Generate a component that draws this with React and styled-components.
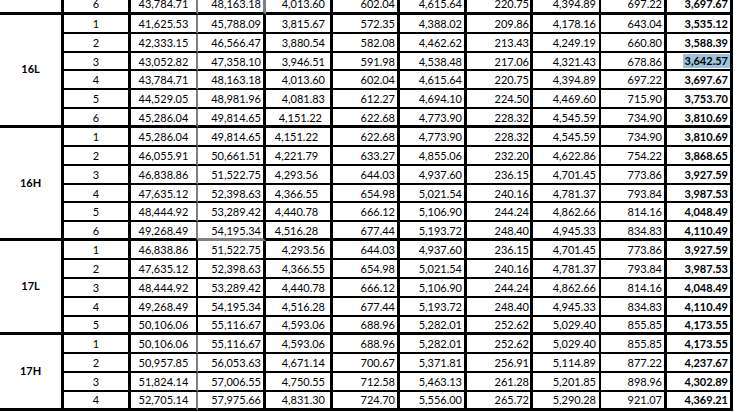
import React from 'react'
import styled, { createGlobalStyle } from 'styled-components'

const GlobalStyle = createGlobalStyle`
  html, body {
    margin: 0;
    padding: 0;
    background: #ffffff;
  }
  body {
    font-family: Lato, "Open Sans", sans-serif;
  }
`

const GRID = '#7f7f7f'

// width, right border, alignment and right padding of every column
const columns = [
  { width: 64, edge: 3 },
  { width: 67, edge: 3, align: 'center', pad: 0 },
  { width: 67, edge: 2, align: 'center', pad: 0 },
  { width: 68, edge: 3, align: 'flex-end', pad: 2 },
  { width: 67, edge: 3, align: 'flex-end', pad: 5 },
  { width: 67, edge: 3, align: 'flex-end', pad: 2 },
  { width: 67, edge: 3, align: 'flex-end', pad: 2 },
  { width: 66, edge: 3, align: 'flex-end', pad: 1 },
  { width: 68, edge: 2, align: 'flex-end', pad: 3 },
  { width: 66, edge: 3, align: 'flex-end', pad: 2 },
  { width: 66, edge: 3, align: 'flex-end', pad: 2 },
]

const topRow = ['6', '43,784.71', '48,163.18', '4,013.60', '602.04', '4,615.64', '220.75', '4,394.89', '697.22', '3,697.67']

const groups = [
  {
    label: '16L',
    greyRule: true,
    rows: [
      ['1', '41,625.53', '45,788.09', '3,815.67', '572.35', '4,388.02', '209.86', '4,178.16', '643.04', '3,535.12'],
      ['2', '42,333.15', '46,566.47', '3,880.54', '582.08', '4,462.62', '213.43', '4,249.19', '660.80', '3,588.39'],
      ['3', '43,052.82', '47,358.10', '3,946.51', '591.98', '4,538.48', '217.06', '4,321.43', '678.86', '3,642.57'],
      ['4', '43,784.71', '48,163.18', '4,013.60', '602.04', '4,615.64', '220.75', '4,394.89', '697.22', '3,697.67'],
      ['5', '44,529.05', '48,981.96', '4,081.83', '612.27', '4,694.10', '224.50', '4,469.60', '715.90', '3,753.70'],
      ['6', '45,286.04', '49,814.65', '4,151.22', '622.68', '4,773.90', '228.32', '4,545.59', '734.90', '3,810.69'],
    ],
  },
  {
    label: '16H',
    greyRule: true,
    centerTax: true,
    rows: [
      ['1', '45,286.04', '49,814.65', '4,151.22', '622.68', '4,773.90', '228.32', '4,545.59', '734.90', '3,810.69'],
      ['2', '46,055.91', '50,661.51', '4,221.79', '633.27', '4,855.06', '232.20', '4,622.86', '754.22', '3,868.65'],
      ['3', '46,838.86', '51,522.75', '4,293.56', '644.03', '4,937.60', '236.15', '4,701.45', '773.86', '3,927.59'],
      ['4', '47,635.12', '52,398.63', '4,366.55', '654.98', '5,021.54', '240.16', '4,781.37', '793.84', '3,987.53'],
      ['5', '48,444.92', '53,289.42', '4,440.78', '666.12', '5,106.90', '244.24', '4,862.66', '814.16', '4,048.49'],
      ['6', '49,268.49', '54,195.34', '4,516.28', '677.44', '5,193.72', '248.40', '4,945.33', '834.83', '4,110.49'],
    ],
  },
  {
    label: '17L',
    greyRule: false,
    rows: [
      ['1', '46,838.86', '51,522.75', '4,293.56', '644.03', '4,937.60', '236.15', '4,701.45', '773.86', '3,927.59'],
      ['2', '47,635.12', '52,398.63', '4,366.55', '654.98', '5,021.54', '240.16', '4,781.37', '793.84', '3,987.53'],
      ['3', '48,444.92', '53,289.42', '4,440.78', '666.12', '5,106.90', '244.24', '4,862.66', '814.16', '4,048.49'],
      ['4', '49,268.49', '54,195.34', '4,516.28', '677.44', '5,193.72', '248.40', '4,945.33', '834.83', '4,110.49'],
      ['5', '50,106.06', '55,116.67', '4,593.06', '688.96', '5,282.01', '252.62', '5,029.40', '855.85', '4,173.55'],
    ],
  },
  {
    label: '17H',
    greyRule: true,
    rows: [
      ['1', '50,106.06', '55,116.67', '4,593.06', '688.96', '5,282.01', '252.62', '5,029.40', '855.85', '4,173.55'],
      ['2', '50,957.85', '56,053.63', '4,671.14', '700.67', '5,371.81', '256.91', '5,114.89', '877.22', '4,237.67'],
      ['3', '51,824.14', '57,006.55', '4,750.55', '712.58', '5,463.13', '261.28', '5,201.85', '898.96', '4,302.89'],
      ['4', '52,705.14', '57,975.66', '4,831.30', '724.70', '5,556.00', '265.72', '5,290.28', '921.07', '4,369.21'],
    ],
  },
]

const Viewport = styled.div`
  width: 751px;
  height: 412px;
  overflow: hidden;
  background: #ffffff;
`

const Sheet = styled.div`
  display: grid;
  grid-template-columns: ${columns.map(c => c.width + 'px').join(' ')};
  grid-auto-rows: 18.86px;
  margin-top: -4px;
  width: max-content;
  font-size: 11px;
  color: #000000;
`

const GroupLabel = styled.div`
  grid-row: span ${p => p.$span};
  display: flex;
  align-items: center;
  justify-content: center;
  border-right: 3px solid #000000;
  border-bottom: 3px solid #000000;
  font-weight: 700;
  padding-bottom: 2px;
`

const Cell = styled.div`
  display: flex;
  align-items: center;
  justify-content: ${p => p.$align};
  padding: 0 ${p => p.$pad}px 0 0;
  border-right: ${p => p.$edge}px solid ${p => p.$edgeColor};
  border-bottom: ${p => (p.$end ? 3 : 2)}px solid ${p => p.$bottomColor};
  font-weight: ${p => (p.$bold ? 700 : 400)};
  white-space: nowrap;
  overflow: hidden;
`

const Selected = styled.span`
  background: #9cc3dc;
  padding: 0 2px;
  line-height: 14px;
  margin-right: -2px;
`

const Row = ({ values, end, greyRule, greyRight, centerTax, taxPad, greyBottom, highlight }) => (
  <>
    {values.map((value, i) => {
      const col = columns[i + 1]
      let edgeColor = '#000000'
      if (i + 1 === 2 && greyRule) edgeColor = GRID
      if (i + 1 === 3 && greyRight) edgeColor = GRID
      let align = col.align
      let pad = col.pad
      if (i + 1 === 4 && centerTax) {
        align = 'center'
        pad = 3
      }
      if (i + 1 === 4 && taxPad) pad = taxPad
      const isLast = i === values.length - 1
      return (
        <Cell
          key={i}
          $align={align}
          $pad={pad}
          $edge={col.edge}
          $edgeColor={edgeColor}
          $end={end}
          $bottomColor={greyBottom && i + 1 === 3 ? GRID : '#000000'}
          $bold={isLast}
        >
          {isLast && highlight ? <Selected>{value}</Selected> : value}
        </Cell>
      )
    })}
  </>
)

const App = () => {
  return (
    <>
      <GlobalStyle />
      <Viewport>
        <Sheet>
          <GroupLabel $span={1} />
          <Row values={topRow} end greyRule greyRight />
          {groups.map((group) => (
            <React.Fragment key={group.label}>
              <GroupLabel $span={group.rows.length}>{group.label}</GroupLabel>
              {group.rows.map((values, r) => (
                <Row
                  key={r}
                  values={values}
                  end={r === group.rows.length - 1}
                  greyRule={group.greyRule}
                  centerTax={group.centerTax}
                  taxPad={group.label === '16L' && r === 5 ? 8 : 0}
                  greyBottom={group.label === '16H' && r === group.rows.length - 1}
                  highlight={group.label === '16L' && r === 2}
                />
              ))}
            </React.Fragment>
          ))}
        </Sheet>
      </Viewport>
    </>
  )
}

export default App
